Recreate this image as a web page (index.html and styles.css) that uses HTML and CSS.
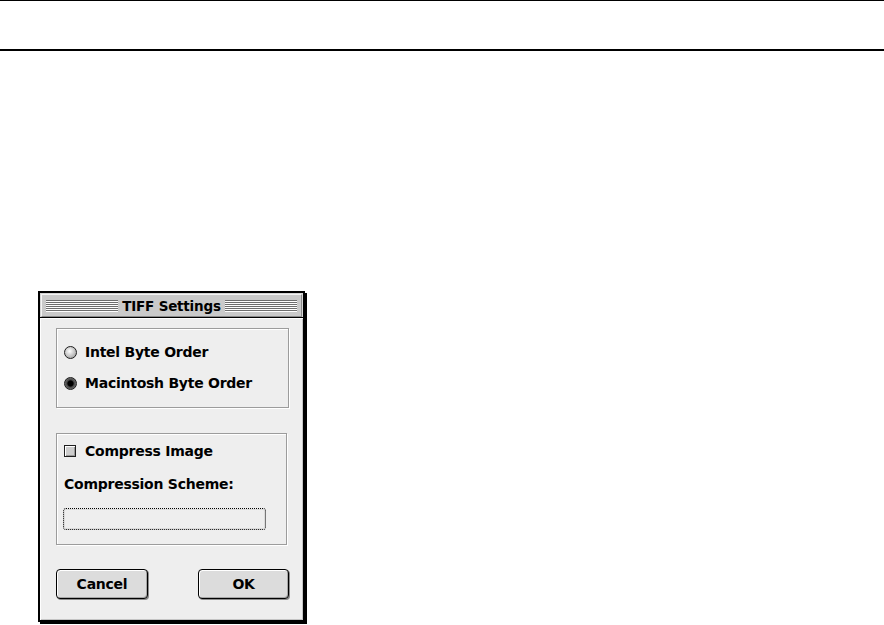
FILE: index.html
```html
<!DOCTYPE html>
<html lang="en">
<head>
<meta charset="utf-8">
<title>TIFF Settings</title>
<link rel="stylesheet" href="styles.css">
</head>
<body>
<div class="page">
  <div class="rule rule-top"></div>
  <div class="rule rule-bottom"></div>
  <div class="dialog">
    <div class="titlebar">
      <span class="stripes"></span>
      <span class="title">TIFF Settings</span>
      <span class="stripes"></span>
    </div>
    <div class="content">
      <div class="group group-order">
        <div class="option"><span class="radio"></span><span>Intel Byte Order</span></div>
        <div class="option"><span class="radio on"></span><span>Macintosh Byte Order</span></div>
      </div>
      <div class="group group-compress">
        <div class="option"><span class="check"></span><span>Compress Image</span></div>
        <div class="caption">Compression Scheme:</div>
        <div class="popup"></div>
      </div>
      <div class="buttons">
        <div class="btn btn-cancel">Cancel</div>
        <div class="btn btn-ok">OK</div>
      </div>
    </div>
  </div>
</div>
</body>
</html>
```

FILE: styles.css
```css
html, body {
  margin: 0;
  padding: 0;
  background: #ffffff;
}

body {
  font-family: "DejaVu Sans", "Liberation Sans", sans-serif;
  font-weight: bold;
  font-size: 14px;
  letter-spacing: -0.25px;
  color: #000;
}

.page {
  width: 884px;
  height: 625px;
  overflow: hidden;
}

.rule {
  background: #000;
}

.rule-top {
  height: 1px;
}

.rule-bottom {
  height: 2px;
  margin-top: 48px;
}

.dialog {
  margin: 240px 0 0 38px;
  width: 267px;
  height: 331px;
  box-sizing: border-box;
  border: 2px solid #000;
  box-shadow: 2px 2px 0 #000;
  background: #d6d6d6;
  display: flex;
  flex-direction: column;
}

.titlebar {
  margin: 1px 1px 0;
  height: 23px;
  box-sizing: border-box;
  background: #cacaca;
  border-top: 1px solid #f4f4f4;
  border-left: 1px solid #f4f4f4;
  border-right: 1px solid #8a8a8a;
  border-bottom: 1px solid #8a8a8a;
  display: flex;
  align-items: center;
  gap: 4px;
  padding: 0 4px;
}

.stripes {
  flex: 1;
  height: 12px;
  background: repeating-linear-gradient(to bottom, #6e6e6e 0 1px, #ffffff 1px 2px);
}

.title {
  font-size: 13.5px;
  letter-spacing: -0.2px;
  line-height: 16px;
  white-space: nowrap;
}

.content {
  flex: 1;
  border-top: 1px solid #000;
  background: #eeeeee;
  box-shadow: inset 1px 1px 0 #ffffff, inset -1px -1px 0 #c4c4c4;
  padding: 10px 0 0 16px;
  display: flex;
  flex-direction: column;
}

.group {
  box-sizing: border-box;
  border: 1px solid #9c9c9c;
  box-shadow: inset 1px 1px 0 #ffffff, 1px 1px 0 #ffffff;
  padding-left: 7px;
  display: flex;
  flex-direction: column;
}

.group-order {
  width: 233px;
  height: 80px;
  padding-top: 15px;
  gap: 15px;
}

.group-compress {
  width: 231px;
  height: 112px;
  margin-top: 25px;
  padding-top: 9px;
}

.option {
  height: 16px;
  line-height: 16px;
  display: flex;
  align-items: center;
  gap: 8px;
  white-space: nowrap;
}

.radio {
  width: 13px;
  height: 13px;
  box-sizing: border-box;
  border-radius: 50%;
  border: 1px solid #1e1e1e;
  background: radial-gradient(circle at 42% 38%, #ffffff 0, #d8d8d8 35%, #909090 100%);
  flex: none;
}

.radio.on {
  background: radial-gradient(circle at 50% 50%, #000 0 2.6px, #444 3.6px, #6a6a6a 70%, #333 100%);
}

.check {
  width: 12px;
  height: 12px;
  box-sizing: border-box;
  border: 1px solid #1e1e1e;
  background: #cdcdcd;
  box-shadow: inset 1px 1px 0 #ffffff, inset -1px -1px 0 #999;
  flex: none;
  margin-right: 1px;
}

.caption {
  margin-top: 17px;
  height: 16px;
  line-height: 16px;
  white-space: nowrap;
}

.popup {
  margin: 16px 0 0 -1px;
  width: 203px;
  height: 22px;
  box-sizing: border-box;
  border: 1px dotted #000;
  border-radius: 3px;
  box-shadow: inset 0 0 0 1px rgba(0, 0, 0, 0.08);
}

.buttons {
  margin-top: 24px;
  width: 233px;
  display: flex;
  justify-content: space-between;
}

.btn {
  height: 30px;
  box-sizing: border-box;
  border: 1px solid #000;
  border-radius: 4px;
  background: #dcdcdc;
  box-shadow: inset 1px 1px 0 #ffffff, inset -1px -1px 0 #a6a6a6, 1px 1px 0 #8c8c8c;
  display: flex;
  align-items: center;
  justify-content: center;
  line-height: 16px;
}

.btn-cancel {
  width: 92px;
}

.btn-ok {
  width: 91px;
}
```
